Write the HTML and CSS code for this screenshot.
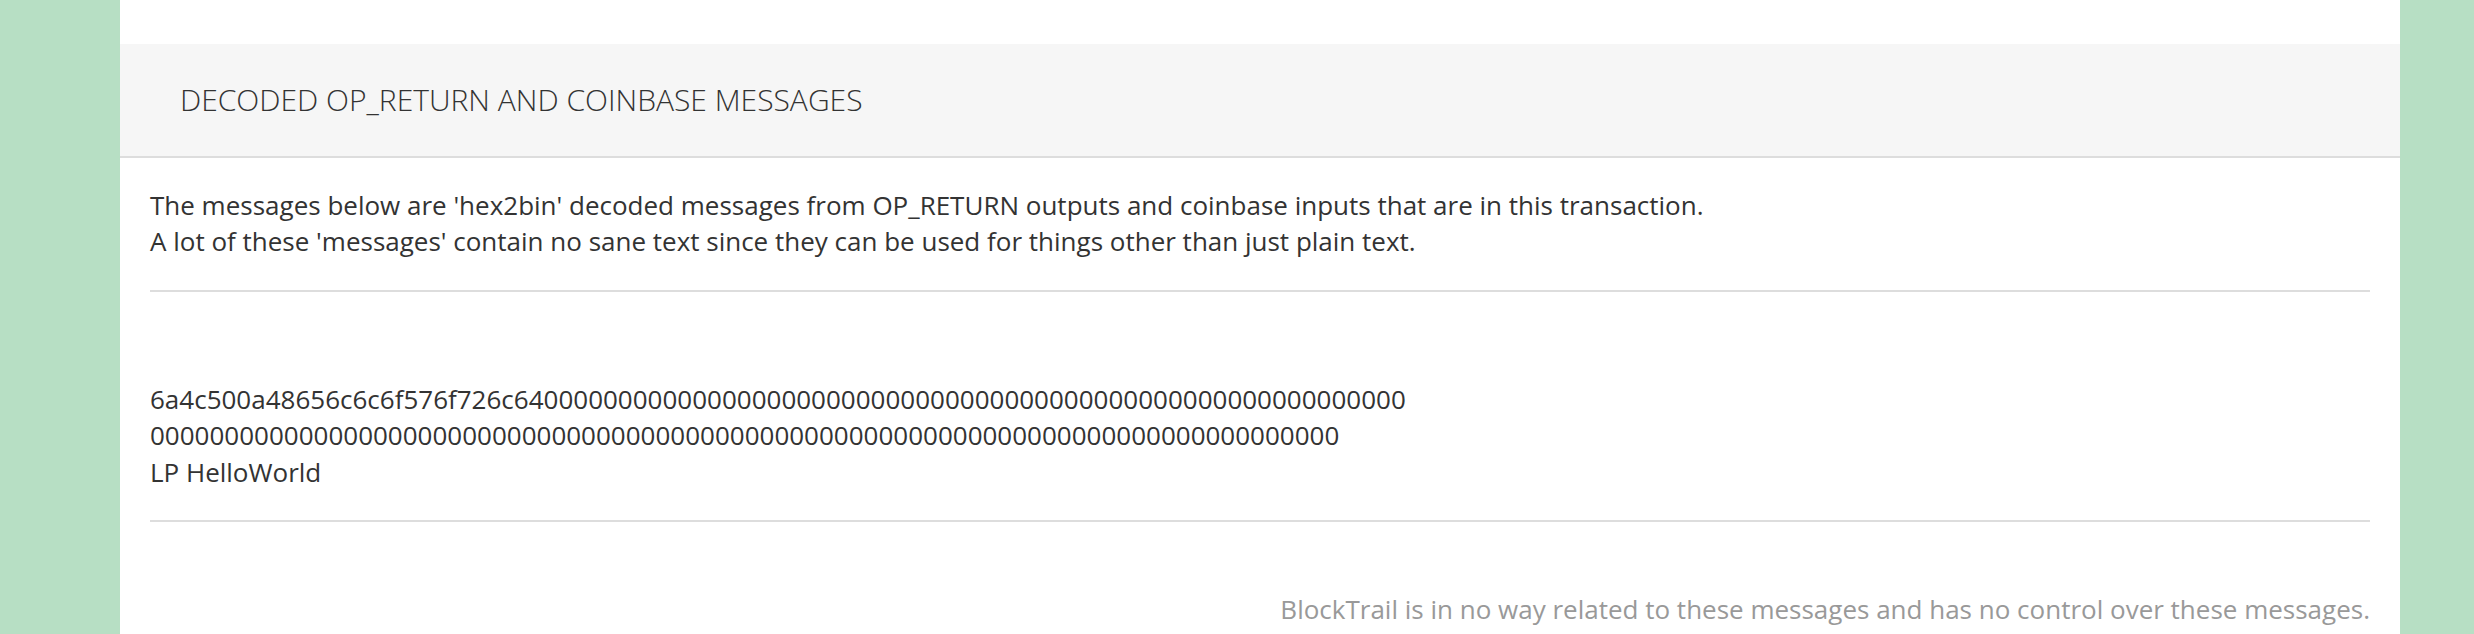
FILE: index.html
```html
<!DOCTYPE html>
<html>
<head>
<meta charset="utf-8">
<link rel="stylesheet" href="styles.css">
</head>
<body>
<div class="page">
  <div class="panel">
    <div class="panel-heading">
      <h3 class="panel-title">DECODED OP_RETURN AND COINBASE MESSAGES</h3>
    </div>
    <div class="panel-body">
      <p class="intro">The messages below are 'hex2bin' decoded messages from OP_RETURN outputs and coinbase inputs that are in this transaction.<br>A lot of these 'messages' contain no sane text since they can be used for things other than just plain text.</p>
      <hr class="divider">
      <div class="message">
        <div class="hex">6a4c500a48656c6c6f576f726c640000000000000000000000000000000000000000000000000000000000</div>
        <div class="hex">00000000000000000000000000000000000000000000000000000000000000000000000000000000</div>
        <div class="decoded">LP HelloWorld</div>
      </div>
      <hr class="divider">
      <p class="disclaimer">BlockTrail is in no way related to these messages and has no control over these messages.</p>
    </div>
  </div>
</div>
</body>
</html>
```
FILE: styles.css
```css
html, body {
  margin: 0;
  padding: 0;
}
body {
  background: #b7dfc4;
  font-family: "Open Sans", "Liberation Sans", sans-serif;
  color: #333333;
  font-size: 26px;
  line-height: 36.4px;
}
.page {
  margin-left: 120px;
  width: 2280px;
  min-height: 634px;
  background: #ffffff;
}
.panel {
  padding-top: 44px;
}
.panel-heading {
  background: #f6f6f6;
  border-bottom: 2px solid #dddddd;
  height: 112px;
  padding-left: 60px;
  display: flex;
  align-items: center;
}
.panel-title {
  margin: 0;
  font-size: 30px;
  font-weight: 300;
  line-height: 40px;
  color: #333333;
}
.panel-body {
  padding: 29px 30px 0 30px;
}
.intro {
  margin: 0;
}
.divider {
  margin: 30px 0;
  border: 0;
  border-top: 2px solid #dddddd;
  height: 0;
}
.message {
  padding-top: 59px;
}
.disclaimer {
  margin: 0;
  padding-top: 39px;
  text-align: right;
  color: #999999;
}
```
